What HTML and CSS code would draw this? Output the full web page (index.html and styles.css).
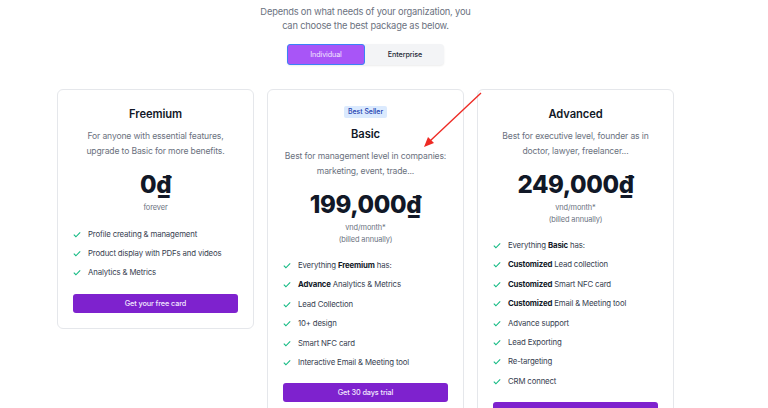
FILE: index.html
```html
<!DOCTYPE html>
<html>
<head>
<meta charset="utf-8">
<link rel="stylesheet" href="styles.css">
</head>
<body>
<div class="page">
  <p class="intro">Depends on what needs of your organization, you<br>can choose the best package as below.</p>
  <div class="toggle-wrap">
    <div class="toggle">
      <button class="tab active">Individual</button>
      <button class="tab">Enterprise</button>
    </div>
  </div>
  <div class="cards">
    <div class="card">
      <h3 class="title">Freemium</h3>
      <p class="desc">For anyone with essential features,<br>upgrade to Basic for more benefits.</p>
      <div class="price">0₫</div>
      <p class="note">forever</p>
      <ul class="features">
        <li><svg class="chk" viewBox="0 0 10 8"><path d="M1 4.2l2.6 2.6L9 1.3"/></svg><span>Profile creating &amp; management</span></li>
        <li><svg class="chk" viewBox="0 0 10 8"><path d="M1 4.2l2.6 2.6L9 1.3"/></svg><span>Product display with PDFs and videos</span></li>
        <li><svg class="chk" viewBox="0 0 10 8"><path d="M1 4.2l2.6 2.6L9 1.3"/></svg><span>Analytics &amp; Metrics</span></li>
      </ul>
      <button class="cta">Get your free card</button>
    </div>
    <div class="card">
      <div class="badge-row"><span class="badge">Best Seller</span></div>
      <h3 class="title title-badge">Basic</h3>
      <p class="desc">Best for management level in companies:<br>marketing, event, trade...</p>
      <div class="price">199,000₫</div>
      <p class="note">vnd/month*<br>(billed annually)</p>
      <ul class="features">
        <li><svg class="chk" viewBox="0 0 10 8"><path d="M1 4.2l2.6 2.6L9 1.3"/></svg><span>Everything <b>Freemium</b> has:</span></li>
        <li><svg class="chk" viewBox="0 0 10 8"><path d="M1 4.2l2.6 2.6L9 1.3"/></svg><span><b>Advance</b> Analytics &amp; Metrics</span></li>
        <li><svg class="chk" viewBox="0 0 10 8"><path d="M1 4.2l2.6 2.6L9 1.3"/></svg><span>Lead Collection</span></li>
        <li><svg class="chk" viewBox="0 0 10 8"><path d="M1 4.2l2.6 2.6L9 1.3"/></svg><span>10+ design</span></li>
        <li><svg class="chk" viewBox="0 0 10 8"><path d="M1 4.2l2.6 2.6L9 1.3"/></svg><span>Smart NFC card</span></li>
        <li><svg class="chk" viewBox="0 0 10 8"><path d="M1 4.2l2.6 2.6L9 1.3"/></svg><span>Interactive Email &amp; Meeting tool</span></li>
      </ul>
      <button class="cta">Get 30 days trial</button>
    </div>
    <div class="card">
      <h3 class="title">Advanced</h3>
      <p class="desc">Best for executive level, founder as in<br>doctor, lawyer, freelancer...</p>
      <div class="price">249,000₫</div>
      <p class="note">vnd/month*<br>(billed annually)</p>
      <ul class="features">
        <li><svg class="chk" viewBox="0 0 10 8"><path d="M1 4.2l2.6 2.6L9 1.3"/></svg><span>Everything <b>Basic</b> has:</span></li>
        <li><svg class="chk" viewBox="0 0 10 8"><path d="M1 4.2l2.6 2.6L9 1.3"/></svg><span><b>Customized</b> Lead collection</span></li>
        <li><svg class="chk" viewBox="0 0 10 8"><path d="M1 4.2l2.6 2.6L9 1.3"/></svg><span><b>Customized</b> Smart NFC card</span></li>
        <li><svg class="chk" viewBox="0 0 10 8"><path d="M1 4.2l2.6 2.6L9 1.3"/></svg><span><b>Customized</b> Email &amp; Meeting tool</span></li>
        <li><svg class="chk" viewBox="0 0 10 8"><path d="M1 4.2l2.6 2.6L9 1.3"/></svg><span>Advance support</span></li>
        <li><svg class="chk" viewBox="0 0 10 8"><path d="M1 4.2l2.6 2.6L9 1.3"/></svg><span>Lead Exporting</span></li>
        <li><svg class="chk" viewBox="0 0 10 8"><path d="M1 4.2l2.6 2.6L9 1.3"/></svg><span>Re-targeting</span></li>
        <li><svg class="chk" viewBox="0 0 10 8"><path d="M1 4.2l2.6 2.6L9 1.3"/></svg><span>CRM connect</span></li>
      </ul>
      <button class="cta cta-cut"></button>
    </div>
  </div>
</div>
<svg class="arrow" width="768" height="408" viewBox="0 0 768 408">
  <line x1="481" y1="93" x2="430" y2="141" stroke="#ee2a24" stroke-width="1.3"/>
  <polygon points="424,147 428,137 434,143" fill="#ee2a24"/>
</svg>
</body>
</html>
```
FILE: styles.css
```css
* { box-sizing: border-box; }
html, body { margin: 0; padding: 0; background: #fff; }
body {
  font-family: Inter, "Noto Sans", sans-serif;
  color: #111827;
  width: 768px;
  height: 408px;
  overflow: hidden;
  position: relative;
}
.page {
  width: 617px;
  margin-left: 57px;
}
.intro {
  margin: 5px 0 0;
  text-align: center;
  font-size: 9.3px;
  letter-spacing: -0.18px;
  line-height: 14px;
  color: #6b7280;
}
.toggle-wrap {
  display: flex;
  justify-content: center;
  margin-top: 11px;
}
.toggle {
  display: flex;
  background: #f3f4f6;
  border-radius: 4px;
  box-shadow: 0 1px 2px rgba(0,0,0,0.08);
}
.tab {
  width: 78px;
  height: 21px;
  border: 1px solid transparent;
  border-radius: 3px;
  background: transparent;
  font-family: inherit;
  font-size: 7.2px;
  letter-spacing: -0.1px;
  font-weight: 500;
  color: #1f2937;
  padding: 0;
}
.tab + .tab { margin-left: 1px; }
.tab.active {
  background: #a855f7;
  color: #f3e8ff;
  border-color: #3b82f6;
  font-weight: 400;
}
.cards {
  display: flex;
  align-items: flex-start;
  gap: 13px;
  margin-top: 24px;
}
.card {
  flex: 0 0 197px;
  border: 1px solid #e5e7eb;
  border-radius: 6px;
  padding: 16px 15px 15px;
  text-align: center;
  background: #fff;
}
.title {
  margin: 0;
  font-size: 11.2px;
  letter-spacing: -0.1px;
  line-height: 16px;
  font-weight: 600;
  color: #111827;
}
.badge-row { display: flex; justify-content: center; }
.badge {
  display: inline-block;
  background: #dbeafe;
  color: #1e40af;
  font-size: 6.9px;
  font-weight: 500;
  line-height: 12px;
  padding: 0 4px;
  border-radius: 2px;
}
.title-badge { margin-top: 8px; }
.desc {
  margin: 7px 0 0;
  font-size: 8.6px;
  letter-spacing: -0.15px;
  line-height: 15px;
  color: #6b7280;
}
.price {
  margin-top: 12px;
  font-size: 24px;
  line-height: 28px;
  font-weight: 800;
  color: #111827;
  letter-spacing: -0.4px;
}
.note {
  margin: 3px 0 0;
  font-size: 7.4px;
  letter-spacing: -0.1px;
  line-height: 11.5px;
  color: #6b7280;
}
.features {
  list-style: none;
  margin: 14px 0 0;
  padding: 0;
  display: flex;
  flex-direction: column;
  gap: 6.4px;
  text-align: left;
}
.features li {
  display: flex;
  align-items: center;
  font-size: 7.8px;
  letter-spacing: -0.15px;
  line-height: 13px;
  color: #374151;
}
.features b { font-weight: 700; color: #111827; }
.chk {
  width: 8px;
  height: 7px;
  margin: 0 7px 0 0;
  flex: none;
  fill: none;
  stroke: #10b981;
  stroke-width: 1.3;
}
.cta {
  display: block;
  width: 100%;
  height: 19px;
  margin-top: 14.5px;
  border: none;
  border-radius: 3px;
  background: #7e22ce;
  color: #f3e8ff;
  font-family: inherit;
  font-size: 7.3px;
  letter-spacing: -0.1px;
  font-weight: 500;
  padding: 0;
}
.arrow {
  position: absolute;
  left: 0;
  top: 0;
  pointer-events: none;
}
```
